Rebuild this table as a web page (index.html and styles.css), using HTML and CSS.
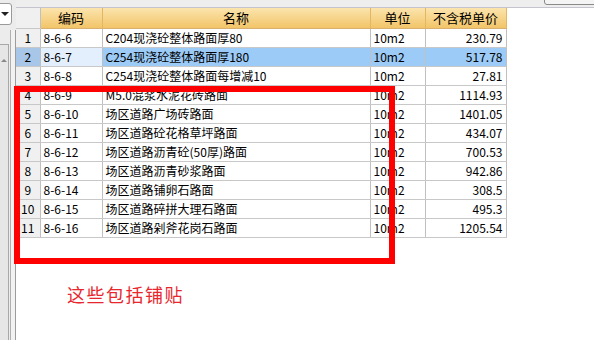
FILE: index.html
```html
<!DOCTYPE html>
<html>
<head>
<meta charset="utf-8">
<link rel="stylesheet" href="styles.css">
</head>
<body>
<div class="app">
  <div class="side">
    <div class="dropdown"><span class="arrow"></span></div>
    <div class="panel">
      <div class="scroll"><span class="up"></span></div>
    </div>
    <div class="splitter"></div>
  </div>
  <div class="main">
    <div class="topbar"><div class="btn"></div></div>
    <table class="grid">
      <colgroup>
        <col class="c-num"><col class="c-code"><col class="c-name"><col class="c-unit"><col class="c-price">
      </colgroup>
      <thead>
        <tr><th></th><th>编码</th><th>名称</th><th>单位</th><th>不含税单价</th></tr>
      </thead>
      <tbody>
        <tr><td class="num">1</td><td>8-6-6</td><td>C204现浇砼整体路面厚80</td><td>10m2</td><td class="price">230.79</td></tr>
        <tr class="sel"><td class="num">2</td><td>8-6-7</td><td>C254现浇砼整体路面厚180</td><td>10m2</td><td class="price">517.78</td></tr>
        <tr><td class="num">3</td><td>8-6-8</td><td>C254现浇砼整体路面每增减10</td><td>10m2</td><td class="price">27.81</td></tr>
        <tr><td class="num">4</td><td>8-6-9</td><td>M5.0混浆水泥花砖路面</td><td>10m2</td><td class="price">1114.93</td></tr>
        <tr><td class="num">5</td><td>8-6-10</td><td>场区道路广场砖路面</td><td>10m2</td><td class="price">1401.05</td></tr>
        <tr><td class="num">6</td><td>8-6-11</td><td>场区道路砼花格草坪路面</td><td>10m2</td><td class="price">434.07</td></tr>
        <tr><td class="num">7</td><td>8-6-12</td><td>场区道路沥青砼(50厚)路面</td><td>10m2</td><td class="price">700.53</td></tr>
        <tr><td class="num">8</td><td>8-6-13</td><td>场区道路沥青砂浆路面</td><td>10m2</td><td class="price">942.86</td></tr>
        <tr><td class="num">9</td><td>8-6-14</td><td>场区道路铺卵石路面</td><td>10m2</td><td class="price">308.5</td></tr>
        <tr><td class="num">10</td><td>8-6-15</td><td>场区道路碎拼大理石路面</td><td>10m2</td><td class="price">495.3</td></tr>
        <tr><td class="num">11</td><td>8-6-16</td><td>场区道路剁斧花岗石路面</td><td>10m2</td><td class="price">1205.54</td></tr>
      </tbody>
    </table>
    <p class="note">这些包括铺贴</p>
  </div>
  <div class="mark"></div>
</div>
</body>
</html>
```
FILE: styles.css
```css
* { box-sizing: border-box; }
html, body { margin: 0; padding: 0; background: #fff; }
body { font-family: "Noto Sans CJK SC", sans-serif; font-size: 12px; color: #000; }

.app { position: relative; display: flex; width: 594px; height: 340px; overflow: hidden; }

.side { position: relative; width: 16px; flex: none; background: #ececec; }
.dropdown { position: absolute; left: -4px; top: 3px; width: 16px; height: 22px; background: #fff; border: 1px solid #9a9a9a; border-radius: 3px; }
.arrow { position: absolute; left: 4px; top: 8px; width: 0; height: 0; border-left: 4px solid transparent; border-right: 4px solid transparent; border-top: 4px solid #222; }
.panel { position: absolute; left: 0; top: 44px; width: 9px; bottom: 0; background: #f4f4f4; border-top: 1px solid #a8a8a8; border-right: 1px solid #a8a8a8; }
.scroll { position: absolute; left: 0; top: 0; width: 8px; bottom: 0; background: #e6e6e6; }
.up { position: absolute; left: 1px; top: 14px; width: 0; height: 0; border-left: 3px solid transparent; border-right: 3px solid transparent; border-bottom: 3px solid #888; }
.splitter { position: absolute; left: 10px; top: 30px; bottom: 0; width: 6px; border-left: 1px solid #b0b0b0; border-right: 1px solid #9c9c9c; background: #f2f2f2; }

.main { flex: 1; display: flex; flex-direction: column; }
.topbar { position: relative; height: 8px; background: #eeeeee; border-bottom: 1px solid #c4c4cc; }
.btn { position: absolute; right: -4px; top: -4px; width: 54px; height: 9px; border: 1px solid #8a8a8a; border-radius: 3px; background: #f4f4f4; }

.grid { border-collapse: collapse; table-layout: fixed; width: 490px; }
.c-num { width: 24px; }
.c-code { width: 62px; }
.c-name { width: 268px; }
.c-unit { width: 55px; }
.c-price { width: 81px; }

.grid th { height: 20px; padding: 0; font-weight: normal; font-size: 13px; text-align: center;
  background: linear-gradient(#fbe4ad, #f2c468); border-right: 1px solid #e3b666; border-bottom: 1px solid #d8b070; }
.grid th:first-child { background: #f0f0f0; border-right: 1px solid #c0c0c0; border-bottom: 1px solid #c8c8c8; }
.grid td { height: 19px; padding: 0 3px; white-space: nowrap; overflow: hidden; line-height: 18px;
  border-right: 1px solid #c0c0c0; border-bottom: 1px solid #c8c8c8; }
.grid td.num { background: #f0f0f0; text-align: center; padding: 0; }
.grid td.price { text-align: right; }

.grid tr.sel td { background: #9ccbf7; }
.grid tr.sel td.num { background: #a8c6e8; }
.grid tr.sel td:nth-child(2) { background: #e3effd; }

.note { margin: 46px 0 0 51px; font-size: 18px; letter-spacing: 1.5px; color: #e8262e; line-height: 20px; }

.mark { position: absolute; left: 14px; top: 86px; width: 381px; height: 178px; border: 6px solid #ff0000; }
```
